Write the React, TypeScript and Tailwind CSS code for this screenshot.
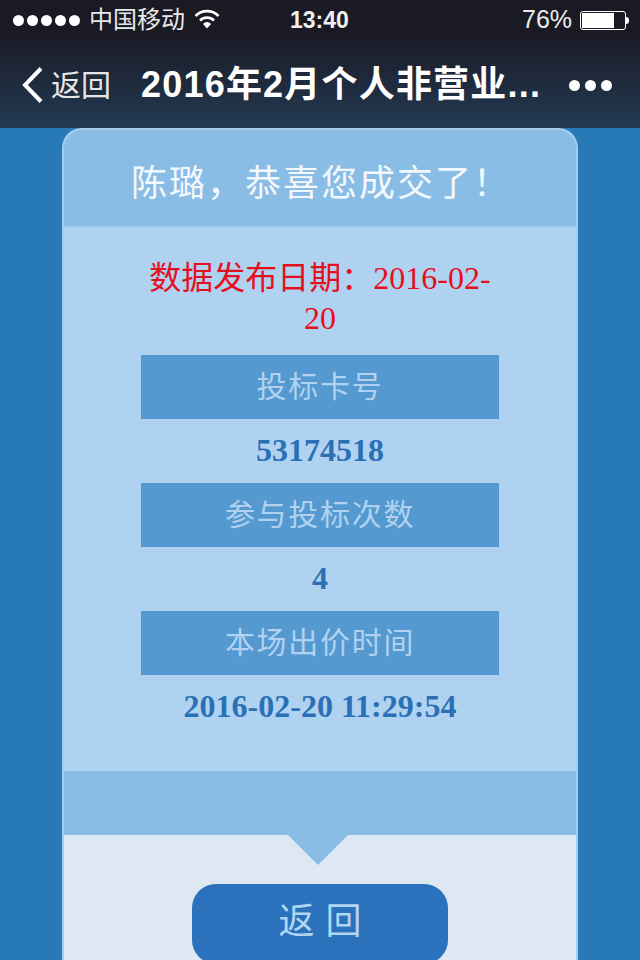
import React from 'react';

const cjk = "font-['Liberation_Sans','Noto_Sans_CJK_SC',sans-serif]";
const serif = "font-['Liberation_Serif','Noto_Sans_CJK_SC',serif]";

const Label: React.FC<{ text: string }> = ({ text }) => (
  <div className="h-16 w-[358px] pb-[2px] bg-[#5599d1] flex items-center justify-center text-[30px] tracking-[1.7px] text-[#b0d2f0]">
    {text}
  </div>
);

const Value: React.FC<{ text: string }> = ({ text }) => (
  <div className={`h-16 pb-[2px] flex items-center justify-center ${serif} font-bold text-[32px] text-[#2a70b5]`}>
    {text}
  </div>
);

const App: React.FC = () => {
  return (
    <div className={`w-[640px] h-[960px] overflow-hidden flex flex-col bg-[#277ab5] ${cjk}`}>
      <div className="h-[128px] shrink-0 bg-gradient-to-b from-[#1a1a24] from-[25%] to-[#213a54] text-white">
        <div className="h-10 flex items-center relative pl-[13px]">
          <div className="flex gap-[3px]">
            {[0, 1, 2, 3, 4].map((i) => (
              <span key={i} className="w-[11px] h-[11px] rounded-full bg-white" />
            ))}
          </div>
          <span className="ml-[9px] text-[24px] text-[#e8e8e8]">中国移动</span>
          <svg className="ml-[9px] mb-[3px]" width="26" height="20" viewBox="0 0 26 20">
            <path d="M1.5 7 A16 16 0 0 1 24.5 7" fill="none" stroke="#fff" strokeWidth="2.6" />
            <path d="M6 11.5 A10 10 0 0 1 20 11.5" fill="none" stroke="#fff" strokeWidth="2.6" />
            <path d="M9 15 A5 5 0 0 1 17 15 L13 19.5 Z" fill="#fff" />
          </svg>
          <span className="absolute left-[290px] text-[23px] font-semibold text-[#f0f0f0]">13:40</span>
          <span className="absolute left-[522px] text-[25px] text-[#ececec]">76%</span>
          <div className="absolute left-[580px] top-[11px] w-[46px] h-[19px] rounded-[3px] border border-white p-[1px]">
            <div className="w-[32px] h-full bg-white" />
          </div>
          <div className="absolute left-[626px] top-[17px] w-[3px] h-[7px] rounded-r-sm bg-white" />
        </div>
        <div className="h-[88px] pt-[2px] flex items-center relative">
          <svg className="ml-[21px]" width="23" height="38" viewBox="0 0 23 38">
            <path d="M20 2.5 L4 19 L20 35.5" fill="none" stroke="#fff" strokeWidth="4" />
          </svg>
          <span className="ml-[7px] text-[30px] text-[#e6e6e6]">返回</span>
          <span className="ml-[30px] text-[36px] tracking-[1.2px] font-semibold whitespace-nowrap">2016年2月个人非营业...</span>
          <div className="absolute left-[569px] flex gap-[5px]">
            <span className="w-[11px] h-[11px] rounded-full bg-white" />
            <span className="w-[11px] h-[11px] rounded-full bg-white" />
            <span className="w-[11px] h-[11px] rounded-full bg-white" />
          </div>
        </div>
      </div>

      <div className="mx-auto w-[516px] flex-1 rounded-t-[20px] border-x-2 border-t-2 border-[#a4cced] bg-[#deE8f2] flex flex-col overflow-hidden">
        <div className="h-[96px] shrink-0 pt-[12px] pl-[2px] bg-[#89bde6] flex items-center justify-center text-[36px] tracking-[2px] text-[#f2f8fc]">
          陈璐，恭喜您成交了！
        </div>
        <div className="h-[545px] shrink-0 border-t-2 border-[#a4cced] bg-[#afd2f0] flex flex-col items-center">
          <div className={`w-[358px] mt-[30px] h-[97px] text-center ${serif} text-[32px] leading-[40px] text-[#e60f1e]`}>
            数据发布日期：2016-02-20
          </div>
          <Label text="投标卡号" />
          <Value text="53174518" />
          <Label text="参与投标次数" />
          <Value text="4" />
          <Label text="本场出价时间" />
          <Value text="2016-02-20 11:29:54" />
        </div>
        <div className="h-[64px] shrink-0 bg-[#89bde6] relative">
          <div className="absolute left-[224px] top-[64px] w-0 h-0 border-x-[30px] border-x-transparent border-t-[30px] border-t-[#89bde6]" />
        </div>
        <div className="flex justify-center pt-[49px]">
          <div className="w-[256px] h-[80px] shrink-0 rounded-[24px] pb-[4px] bg-[#2b71bb] flex items-center justify-center text-[36px] tracking-[11px] pl-[11px] text-[#afd6f2]">
            返回
          </div>
        </div>
      </div>
    </div>
  );
};

export default App;
